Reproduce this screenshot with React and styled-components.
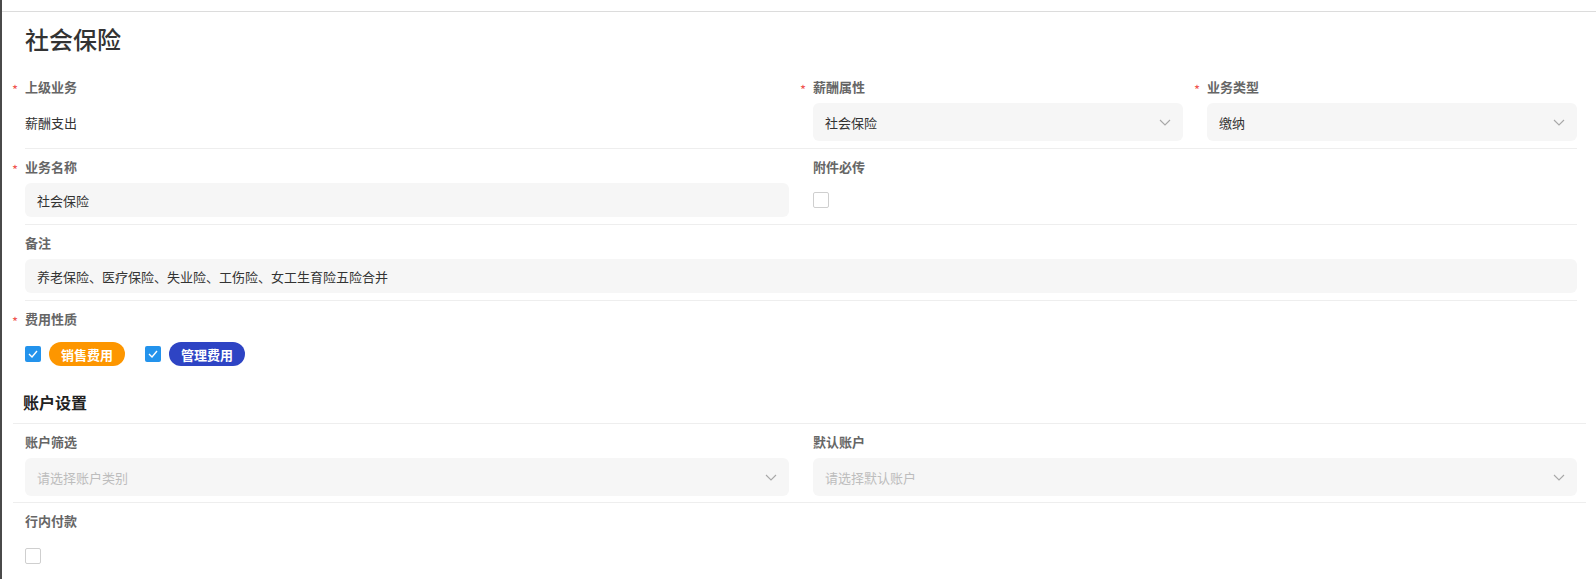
import React from 'react'
import styled, {createGlobalStyle, css} from 'styled-components'

const GlobalStyle = createGlobalStyle`
  body {
    margin: 0;
    background: #ffffff;
    font-family: "Noto Sans CJK SC", "Noto Sans", sans-serif;
    color: #333333;
  }
`

const Page = styled.div`
  height: 579px;
  box-sizing: border-box;
  padding-top: 11px;
  border-left: 2px solid #4a4a4a;
  overflow: hidden;
`

const Sheet = styled.div`
  border-top: 1px solid #dcdcdc;
  padding: 0 19px 0 23px;
`

const Title = styled.h1`
  margin: 11px 0 14px;
  font-size: 24px;
  line-height: 32px;
  font-weight: 500;
  color: #333333;
`

const FormRow = styled.div`
  display: grid;
  grid-template-columns: repeat(4, 1fr);
  column-gap: 24px;
  padding: 8px 0 7px;
  ${p =>
    p.$divider &&
    css`
      border-bottom: 1px solid #eeeeee;
    `}
`

const Field = styled.div`
  grid-column: span ${p => p.$span || 1};
  display: flex;
  flex-direction: column;
  gap: 6px;
`

const Label = styled.div`
  position: relative;
  font-size: 13px;
  line-height: 20px;
  font-weight: 700;
  color: #666666;
`

const Star = styled.span`
  position: absolute;
  left: -13px;
  top: 3px;
  color: #f0544f;
  font-size: 13px;
  font-weight: 400;
`

const Slot = styled.div`
  flex: 1 0 auto;
  display: flex;
  align-items: center;
  min-height: ${p => p.$height || 0}px;
  gap: 8px;
`

const Value = styled.span`
  font-size: 13px;
  color: #333333;
`

const Box = styled.div`
  display: flex;
  align-items: center;
  justify-content: space-between;
  height: ${p => (p.$select ? 38 : 34)}px;
  flex-shrink: 0;
  box-sizing: border-box;
  padding: 0 12px;
  background: #f6f6f6;
  border-radius: 6px;
  font-size: 13px;
  color: ${p => (p.$placeholder ? '#bdbdbd' : '#333333')};
`

const CheckBox = styled.span`
  width: 16px;
  height: 16px;
  box-sizing: border-box;
  border-radius: 2px;
  display: inline-flex;
  align-items: center;
  justify-content: center;
  flex-shrink: 0;
  ${p =>
    p.$checked
      ? css`
          background: #2393ec;
        `
      : css`
          border: 1px solid #cfcfcf;
          background: #ffffff;
        `}
`

const Tag = styled.span`
  height: 24px;
  padding: 0 12px;
  border-radius: 12px;
  display: inline-flex;
  align-items: center;
  font-size: 13px;
  font-weight: 700;
  color: #ffffff;
  background: ${p => p.$color};
  margin-right: 12px;
`

const AccountSection = styled.div`
  margin: 0 -9px 0 -12px;
`

const SectionHeading = styled.h2`
  margin: 10px 0 0;
  padding: 0 0 9px 10px;
  font-size: 16px;
  line-height: 24px;
  font-weight: 700;
  color: #222222;
  border-bottom: 1px solid #eeeeee;
`

const AccountRow = styled(FormRow)`
  padding: 8px 9px 6px 12px;
`

const Chevron = () => (
  <svg width="12" height="7" viewBox="0 0 12 7">
    <polyline points="1,1 6,6 11,1" fill="none" stroke="#a8a8a8" strokeWidth="1.1" />
  </svg>
)

const Tick = () => (
  <svg width="10" height="8" viewBox="0 0 10 8">
    <polyline points="1,4 4,7 9,1" fill="none" stroke="#ffffff" strokeWidth="1.4" />
  </svg>
)

const FieldLabel = ({required, children}) => (
  <Label>
    {required && <Star>*</Star>}
    {children}
  </Label>
)

const Select = ({value, placeholder}) => (
  <Box $select $placeholder={!value}>
    <span>{value || placeholder}</span>
    <Chevron />
  </Box>
)

const feeTypes = [
  {name: '销售费用', color: '#fd9600'},
  {name: '管理费用', color: '#2e44c4'}
]

export default function App() {
  return (
    <Page>
      <GlobalStyle />
      <Sheet>
        <Title>社会保险</Title>

        <FormRow $divider>
          <Field $span={2}>
            <FieldLabel required>上级业务</FieldLabel>
            <Slot>
              <Value>薪酬支出</Value>
            </Slot>
          </Field>
          <Field>
            <FieldLabel required>薪酬属性</FieldLabel>
            <Select value="社会保险" />
          </Field>
          <Field>
            <FieldLabel required>业务类型</FieldLabel>
            <Select value="缴纳" />
          </Field>
        </FormRow>

        <FormRow $divider>
          <Field $span={2}>
            <FieldLabel required>业务名称</FieldLabel>
            <Box>社会保险</Box>
          </Field>
          <Field>
            <FieldLabel>附件必传</FieldLabel>
            <Slot>
              <CheckBox />
            </Slot>
          </Field>
        </FormRow>

        <FormRow $divider>
          <Field $span={4}>
            <FieldLabel>备注</FieldLabel>
            <Box>养老保险、医疗保险、失业险、工伤险、女工生育险五险合并</Box>
          </Field>
        </FormRow>

        <FormRow>
          <Field $span={4}>
            <FieldLabel required>费用性质</FieldLabel>
            <Slot $height={38}>
              {feeTypes.map(f => (
                <React.Fragment key={f.name}>
                  <CheckBox $checked>
                    <Tick />
                  </CheckBox>
                  <Tag $color={f.color}>{f.name}</Tag>
                </React.Fragment>
              ))}
            </Slot>
          </Field>
        </FormRow>

        <AccountSection>
          <SectionHeading>账户设置</SectionHeading>
          <AccountRow $divider>
            <Field $span={2}>
              <FieldLabel>账户筛选</FieldLabel>
              <Select placeholder="请选择账户类别" />
            </Field>
            <Field $span={2}>
              <FieldLabel>默认账户</FieldLabel>
              <Select placeholder="请选择默认账户" />
            </Field>
          </AccountRow>
          <AccountRow>
            <Field $span={2}>
              <FieldLabel>行内付款</FieldLabel>
              <Slot $height={38}>
                <CheckBox />
              </Slot>
            </Field>
          </AccountRow>
        </AccountSection>
      </Sheet>
    </Page>
  )
}
